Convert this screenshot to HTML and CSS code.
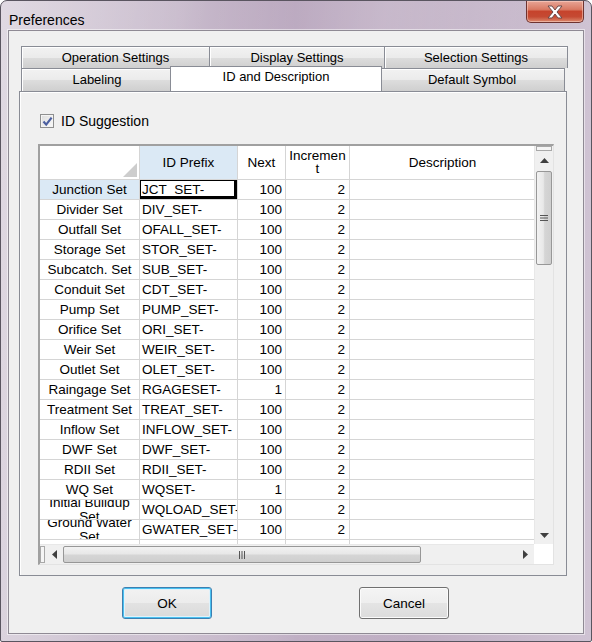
FILE: index.html
```html
<!DOCTYPE html>
<html>
<head>
<meta charset="utf-8">
<link rel="stylesheet" href="styles.css">
</head>
<body>
<div class="window">
  <div class="titlebar">
    <span class="title">Preferences</span>
    <div class="close">
      <svg width="22" height="16" viewBox="0 0 22 16"><path d="M4 2 L8 2 L11 6 L14 2 L18 2 L13 8 L18 14 L14 14 L11 10 L8 14 L4 14 L9 8 Z" fill="#fff" stroke="#6b4a4a" stroke-width="1" stroke-linejoin="round"/></svg>
    </div>
  </div>
  <div class="client">
    <div class="tabstrip">
      <div class="tabrow row1">
        <div class="tab w188">Operation Settings</div>
        <div class="tab w175">Display Settings</div>
        <div class="tab w183">Selection Settings</div>
      </div>
      <div class="tabrow row2">
        <div class="tab w150">Labeling</div>
        <div class="tab sel w210">ID and Description</div>
        <div class="tab w186">Default Symbol</div>
      </div>
    </div>
    <div class="panel">
      <label class="check">
        <span class="box"><svg width="11" height="11" viewBox="0 0 11 11"><path d="M1.5 5.5 L4.2 8.6 L9.6 1.6" fill="none" stroke="#4b5fa0" stroke-width="2.2"/></svg></span>
        <span>ID Suggestion</span>
      </label>
      <div class="grid">
        <div class="gridbody">
          <div class="cells">
            <div class="row head">
              <div class="c rh corner"><svg width="14" height="14" viewBox="0 0 14 14"><path d="M14 0 L14 14 L0 14 Z" fill="#cdcdcd"/></svg></div>
              <div class="c prefix hsel">ID Prefix</div>
              <div class="c next">Next</div>
              <div class="c inc">Incremen<br>t</div>
              <div class="c desc">Description</div>
            </div>
            <div class="row"><div class="c rh rsel">Junction Set</div><div class="c prefix cur">JCT_SET-</div><div class="c next num">100</div><div class="c inc num">2</div><div class="c desc"></div></div>
            <div class="row"><div class="c rh">Divider Set</div><div class="c prefix">DIV_SET-</div><div class="c next num">100</div><div class="c inc num">2</div><div class="c desc"></div></div>
            <div class="row"><div class="c rh">Outfall Set</div><div class="c prefix">OFALL_SET-</div><div class="c next num">100</div><div class="c inc num">2</div><div class="c desc"></div></div>
            <div class="row"><div class="c rh">Storage Set</div><div class="c prefix">STOR_SET-</div><div class="c next num">100</div><div class="c inc num">2</div><div class="c desc"></div></div>
            <div class="row"><div class="c rh">Subcatch. Set</div><div class="c prefix">SUB_SET-</div><div class="c next num">100</div><div class="c inc num">2</div><div class="c desc"></div></div>
            <div class="row"><div class="c rh">Conduit Set</div><div class="c prefix">CDT_SET-</div><div class="c next num">100</div><div class="c inc num">2</div><div class="c desc"></div></div>
            <div class="row"><div class="c rh">Pump Set</div><div class="c prefix">PUMP_SET-</div><div class="c next num">100</div><div class="c inc num">2</div><div class="c desc"></div></div>
            <div class="row"><div class="c rh">Orifice Set</div><div class="c prefix">ORI_SET-</div><div class="c next num">100</div><div class="c inc num">2</div><div class="c desc"></div></div>
            <div class="row"><div class="c rh">Weir Set</div><div class="c prefix">WEIR_SET-</div><div class="c next num">100</div><div class="c inc num">2</div><div class="c desc"></div></div>
            <div class="row"><div class="c rh">Outlet Set</div><div class="c prefix">OLET_SET-</div><div class="c next num">100</div><div class="c inc num">2</div><div class="c desc"></div></div>
            <div class="row"><div class="c rh">Raingage Set</div><div class="c prefix">RGAGESET-</div><div class="c next num">1</div><div class="c inc num">2</div><div class="c desc"></div></div>
            <div class="row"><div class="c rh">Treatment Set</div><div class="c prefix">TREAT_SET-</div><div class="c next num">100</div><div class="c inc num">2</div><div class="c desc"></div></div>
            <div class="row"><div class="c rh">Inflow Set</div><div class="c prefix">INFLOW_SET-</div><div class="c next num">100</div><div class="c inc num">2</div><div class="c desc"></div></div>
            <div class="row"><div class="c rh">DWF Set</div><div class="c prefix">DWF_SET-</div><div class="c next num">100</div><div class="c inc num">2</div><div class="c desc"></div></div>
            <div class="row"><div class="c rh">RDII Set</div><div class="c prefix">RDII_SET-</div><div class="c next num">100</div><div class="c inc num">2</div><div class="c desc"></div></div>
            <div class="row"><div class="c rh">WQ Set</div><div class="c prefix">WQSET-</div><div class="c next num">1</div><div class="c inc num">2</div><div class="c desc"></div></div>
            <div class="row"><div class="c rh wrap">Initial Buildup Set</div><div class="c prefix">WQLOAD_SET-</div><div class="c next num">100</div><div class="c inc num">2</div><div class="c desc"></div></div>
            <div class="row"><div class="c rh wrap">Ground Water Set</div><div class="c prefix">GWATER_SET-</div><div class="c next num">100</div><div class="c inc num">2</div><div class="c desc"></div></div>
            <div class="row"><div class="c rh"></div><div class="c prefix">GWFLOW_SET-</div><div class="c next num">100</div><div class="c inc num">2</div><div class="c desc"></div></div>
          </div>
          <div class="vscroll">
            <div class="split"></div>
            <div class="arrow"><svg width="9" height="5" viewBox="0 0 9 5"><path d="M4.5 0 L9 5 L0 5 Z" fill="#404040"/></svg></div>
            <div class="vthumb"><svg width="8" height="8" viewBox="0 0 8 8"><path d="M0 1.5H8M0 4H8M0 6.5H8" stroke="#555" stroke-width="1"/></svg></div>
            <div class="vtrack"></div>
            <div class="arrow"><svg width="9" height="5" viewBox="0 0 9 5"><path d="M0 0 L9 0 L4.5 5 Z" fill="#404040"/></svg></div>
          </div>
        </div>
        <div class="hbar">
          <div class="hscroll">
            <div class="hsplit"></div>
            <div class="harrow"><svg width="5" height="9" viewBox="0 0 5 9"><path d="M5 0 L5 9 L0 4.5 Z" fill="#404040"/></svg></div>
            <div class="hthumb"><svg width="8" height="8" viewBox="0 0 8 8"><path d="M1.5 0V8M4 0V8M6.5 0V8" stroke="#555" stroke-width="1"/></svg></div>
            <div class="htrack"></div>
            <div class="harrow"><svg width="5" height="9" viewBox="0 0 5 9"><path d="M0 0 L5 4.5 L0 9 Z" fill="#404040"/></svg></div>
          </div>
          <div class="sizebox"></div>
        </div>
      </div>
    </div>
    <div class="buttons">
      <button class="btn default">OK</button>
      <button class="btn">Cancel</button>
    </div>
  </div>
</div>
</body>
</html>
```
FILE: styles.css
```css
* { box-sizing: border-box; }
html, body { margin: 0; padding: 0; }
body {
  width: 592px;
  height: 642px;
  overflow: hidden;
  font-family: "Liberation Sans", Arial, sans-serif;
  background: #fff;
}
.window {
  width: 592px;
  height: 642px;
  border: 1px solid #5a5560;
  border-radius: 7px 7px 2px 2px;
  background:
    linear-gradient(100deg, rgba(255,255,255,0.25) 0%, rgba(255,255,255,0) 30%, rgba(255,255,255,0.15) 55%, rgba(255,255,255,0) 75%),
    linear-gradient(90deg, #d6cdd9 0%, #c9bccd 30%, #b7a4bc 50%, #c2b2c6 75%, #cfc3d3 100%);
  display: flex;
  flex-direction: column;
  padding: 0 7px 7px 7px;
}
.titlebar {
  height: 29px;
  display: flex;
  align-items: flex-start;
  justify-content: space-between;
}
.title {
  font-size: 14px;
  color: #000;
  padding: 11px 0 0 1px;
  line-height: 16px;
}
.close {
  width: 58px;
  height: 22px;
  border: 1px solid #6e3330;
  border-top: none;
  border-radius: 0 0 5px 5px;
  background: linear-gradient(#e8a596 0%, #d97a64 40%, #c6432c 50%, #c54a33 75%, #dc8a6e 100%);
  display: flex;
  align-items: center;
  justify-content: center;
  box-shadow: inset 0 0 0 1px rgba(255,220,210,0.5);
}
.client {
  flex: 1;
  background: #f0f0f0;
  border: 1px solid #8f8a94;
  box-shadow: 0 0 0 1px rgba(255,255,255,0.5);
  display: flex;
  flex-direction: column;
  padding: 15px 16px 0 10px;
}
.tabstrip {
  display: flex;
  flex-direction: column;
  padding-left: 2px;
  height: 45px;
}
.tabrow {
  display: flex;
  height: 22px;
}
.tab {
  font-size: 13px;
  height: 22px;
  line-height: 21px;
  text-align: center;
  color: #000;
  border: 1px solid #898c95;
  border-bottom: none;
  margin-right: -1px;
  background: linear-gradient(#f2f2f2 0%, #ebebeb 50%, #dddddd 51%, #cfcfcf 100%);
  box-shadow: inset 1px 1px 0 #fff;
}
.row2 .tab { height: 23px; }
.tab.sel {
  background: #fff;
  box-shadow: none;
  height: 25px;
  margin-top: -2px;
  margin-left: -2px;
  margin-right: -3px;
  line-height: 20px;
  position: relative;
  z-index: 2;
}
.w188 { width: 189px; }
.w175 { width: 176px; }
.w183 { width: 184px; }
.w150 { width: 152px; }
.w210 { width: 212px; }
.w186 { width: 186px; }
.panel {
  height: 485px;
  border: 1px solid #898c95;
  background: #f0f0f0;
  box-shadow: inset 1px 1px 0 #fff;
  padding: 21px 12px 10px 18px;
  display: flex;
  flex-direction: column;
  position: relative;
  z-index: 1;
}
.check {
  display: flex;
  align-items: center;
  gap: 7px;
  font-size: 14px;
  height: 16px;
  margin-left: 2px;
}
.box {
  width: 14px;
  height: 14px;
  border: 1px solid #8e8f8f;
  background: linear-gradient(135deg, #dcdcdc, #fafafa);
  display: flex;
  align-items: center;
  justify-content: center;
  box-shadow: inset 0 0 0 1px #f4f4f4;
}
.grid {
  margin-top: 15px;
  width: 516px;
  height: 421px;
  border-top: 2px solid #a0a0a0;
  border-left: 2px solid #a0a0a0;
  border-right: 1px solid #e3e3e3;
  border-bottom: 1px solid #e3e3e3;
  background: #fff;
  display: flex;
  flex-direction: column;
}
.gridbody {
  flex: 1;
  display: flex;
  overflow: hidden;
}
.cells {
  flex: 1;
  overflow: hidden;
  display: flex;
  flex-direction: column;
}
.row {
  display: flex;
  height: 20px;
  flex-shrink: 0;
}
.row.head { height: 34px; }
.c {
  font-size: 13.5px;
  color: #000;
  border-right: 1px solid #d5d5d5;
  border-bottom: 1px solid #d5d5d5;
  display: flex;
  align-items: center;
  overflow: hidden;
  white-space: nowrap;
  line-height: 15px;
  flex-shrink: 0;
}
.rh { width: 100px; justify-content: center; }
.prefix { width: 98px; padding-left: 2px; }
.next { width: 48px; justify-content: flex-end; padding-right: 3px; }
.inc { width: 64px; justify-content: flex-end; padding-right: 4px; }
.desc { width: 185px; border-right: none; }
.head .c { justify-content: center; padding: 0; text-align: center; }
.head .inc { align-items: flex-start; padding-top: 3px; line-height: 13px; }
.corner { justify-content: flex-end !important; align-items: flex-end; padding: 0 2px 2px 0 !important; }
.hsel { background: #dbe9f5; }
.rsel { background: #dbe9f5; }
.cur { box-shadow: inset 1px 1px 0 #000, inset -3px -3px 0 #000; }
.wrap { white-space: normal; text-align: center; line-height: 14px; padding: 0 4px; }
.vscroll {
  width: 19px;
  flex-shrink: 0;
  background: #f0f0f0;
  border-left: 1px solid #e8e8e8;
  display: flex;
  flex-direction: column;
}
.split {
  height: 5px;
  margin: 0 1px;
  border: 1px solid #a8a8a8;
  background: #f5f5f5;
}
.arrow {
  height: 18px;
  display: flex;
  align-items: center;
  justify-content: center;
}
.vthumb {
  height: 94px;
  margin: 2px 1px 0 1px;
  border: 1px solid #979797;
  border-radius: 2px;
  background: linear-gradient(90deg, #f2f2f2, #e8e8e8 45%, #d5d5d5 55%, #cfcfcf);
  display: flex;
  align-items: center;
  justify-content: center;
}
.vtrack { flex: 1; }
.hbar {
  height: 20px;
  display: flex;
  flex-shrink: 0;
}
.hscroll {
  flex: 1;
  background: #f0f0f0;
  border-top: 1px solid #e8e8e8;
  display: flex;
}
.hsplit {
  width: 5px;
  margin: 1px 0;
  border: 1px solid #a8a8a8;
  background: #f5f5f5;
}
.harrow {
  width: 18px;
  display: flex;
  align-items: center;
  justify-content: center;
}
.hthumb {
  width: 358px;
  margin: 1px 0;
  border: 1px solid #979797;
  border-radius: 2px;
  background: linear-gradient(#f2f2f2, #e8e8e8 45%, #d5d5d5 55%, #cfcfcf);
  display: flex;
  align-items: center;
  justify-content: center;
}
.htrack { flex: 1; }
.sizebox { width: 19px; background: #fff; }
.buttons {
  display: flex;
  padding: 11px 0 0 103px;
  gap: 147px;
}
.btn {
  width: 90px;
  height: 32px;
  font-family: "Liberation Sans", Arial, sans-serif;
  font-size: 13.5px;
  color: #000;
  border: 1px solid #707070;
  border-radius: 3px;
  background: linear-gradient(#f4f4f4 0%, #eeeeee 50%, #e4e4e4 51%, #dcdcdc 100%);
  box-shadow: inset 0 0 0 1px #fbfbfb;
  padding: 0;
}
.btn.default {
  border-color: #3c7fb1;
  background: linear-gradient(#f2f2f2 0%, #ececec 50%, #e2e2e2 51%, #dadada 100%);
  box-shadow: inset 0 0 0 1px #48c0f0, inset 0 0 0 2px #dff2fb;
}
```
